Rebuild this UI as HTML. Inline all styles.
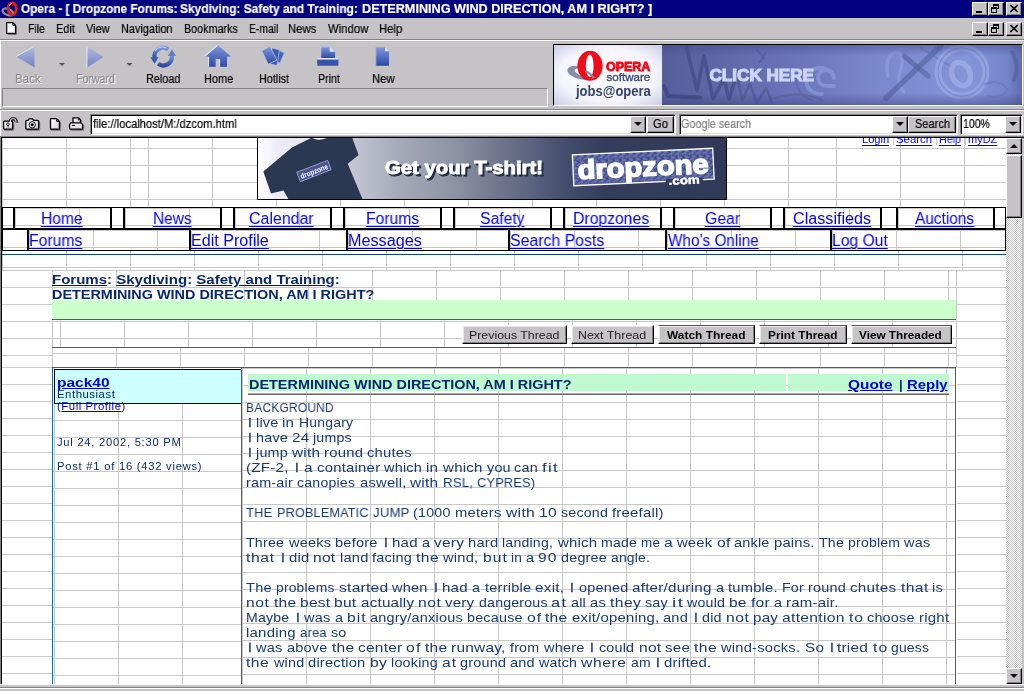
<!DOCTYPE html>
<html>
<head>
<meta charset="utf-8">
<title>Opera - Dropzone Forums</title>
<style>
html,body{margin:0;padding:0;}
body{width:1024px;height:691px;overflow:hidden;position:relative;background:#c6c3c6;font-family:"Liberation Sans",sans-serif;}
.a{position:absolute;display:block;}
.t{position:absolute;white-space:pre;transform-origin:0 50%;will-change:transform;font-family:"Liberation Sans",sans-serif;}
.t u{text-decoration:underline;text-decoration-color:inherit;}
/* grid: 64x17 tile, line on first col / first row */
.g{position:absolute;background-color:#fff;
 background-image:linear-gradient(#c8c8c8 1px,transparent 1px),linear-gradient(90deg,#c8c8c8 1px,transparent 1px);
 background-size:64px 17px;}
.btn{position:absolute;background:#c6c3c6;box-sizing:border-box;border:1px solid;border-color:#fff #000 #000 #fff;box-shadow:inset -1px -1px 0 #848284;}
.sunk{position:absolute;box-sizing:border-box;border:1px solid;border-color:#848284 #fff #fff #848284;}
.fld{position:absolute;box-sizing:border-box;background:#fff;border:1px solid;border-color:#848284 #fff #fff #848284;box-shadow:inset 1px 1px 0 #000, inset -1px -1px 0 #dedbde;}
.pb{position:absolute;background:#c6c3c6;box-sizing:border-box;border:1px solid;border-color:#fff #000 #000 #fff;box-shadow:inset -1px -1px 0 #848284, inset 1px 1px 0 #e8e8e8;}
.k{position:absolute;background:#000;}
.bl{position:absolute;background:#1a6aa8;}
</style>
</head>
<body>
<!-- ===== title bar ===== -->
<div class="a" style="left:0;top:0;width:1024px;height:18px;background:#000080"></div>
<svg class="a" style="left:0;top:0" width="22" height="18" viewBox="0 0 22 18">
<ellipse cx="7.800" cy="12" rx="5.600" ry="3" fill="none" stroke="#8e8e8e" stroke-width="2.300" transform="rotate(22 7.800 12)"/>
<ellipse cx="12.200" cy="8.800" rx="4" ry="5.900" fill="none" stroke="#e01c1c" stroke-width="3"/>
<path d="M9.300 6 Q10 3.800 11.800 3.200" stroke="#ffb8a8" stroke-width="1" fill="none"/>
<path d="M10.500 10 L13.800 13.500" stroke="#8e8e8e" stroke-width="1.600"/>
</svg>

<div class="btn" style="left:972px;top:2px;width:16px;height:14px"></div>
<div class="a" style="left:976px;top:11px;width:6px;height:2px;background:#000"></div>
<div class="btn" style="left:988px;top:2px;width:16px;height:14px"></div>
<div class="a" style="left:993px;top:4px;width:6px;height:5px;box-sizing:border-box;border:1px solid #000;border-top-width:2px"></div>
<div class="a" style="left:991px;top:7px;width:6px;height:6px;box-sizing:border-box;border:1px solid #000;border-top-width:2px;background:#c6c3c6"></div>
<div class="btn" style="left:1006px;top:2px;width:16px;height:14px"></div>
<svg class="a" style="left:1006px;top:2px" width="16" height="14"><path d="M4.3 3 L11.7 10 M11.7 3 L4.3 10" stroke="#000" stroke-width="1.7"/></svg>
<!-- MDI child buttons in menu bar -->
<div class="btn" style="left:972px;top:22px;width:16px;height:14px"></div>
<div class="a" style="left:976px;top:31px;width:6px;height:2px;background:#000"></div>
<div class="btn" style="left:988px;top:22px;width:16px;height:14px"></div>
<div class="a" style="left:993px;top:24px;width:6px;height:5px;box-sizing:border-box;border:1px solid #000;border-top-width:2px"></div>
<div class="a" style="left:991px;top:27px;width:6px;height:6px;box-sizing:border-box;border:1px solid #000;border-top-width:2px;background:#c6c3c6"></div>
<div class="btn" style="left:1006px;top:22px;width:16px;height:14px"></div>
<svg class="a" style="left:1006px;top:22px" width="16" height="14"><path d="M4.3 3 L11.7 10 M11.7 3 L4.3 10" stroke="#000" stroke-width="1.7"/></svg>

<!-- ===== menu bar ===== -->
<svg class="a" style="left:5px;top:21px" width="14" height="15" viewBox="0 0 14 15">
<path d="M1.700 1.600 H7.800 L10.500 4.300 V12.400 H1.700 Z" fill="#fff" stroke="#000" stroke-width="1.200"/>
<path d="M7.800 1.600 V4.300 H10.500" fill="none" stroke="#000" stroke-width="1"/>
<path d="M2.700 13.400 H11.500 V5" fill="none" stroke="#6a686a" stroke-width="1"/>
</svg>

<div class="a" style="left:0;top:39px;width:1024px;height:1px;background:#848284"></div>
<div class="a" style="left:0;top:40px;width:1024px;height:1px;background:#fff"></div>
<!-- ===== toolbar ===== -->
<div class="a" style="left:0;top:41px;width:1px;height:68px;background:#fff"></div>
<div class="a" style="left:0;top:111px;width:1px;height:25px;background:#fff"></div>
<svg class="a" style="left:0;top:41px" width="420" height="32" viewBox="0 41 420 32">
<defs>
<linearGradient id="bg1" x1="0" y1="0" x2="0" y2="1"><stop offset="0" stop-color="#7f98dc"/><stop offset="1" stop-color="#2c4aa4"/></linearGradient>
<linearGradient id="bg2" x1="0" y1="0" x2="0" y2="1"><stop offset="0" stop-color="#b4bce0"/><stop offset="1" stop-color="#7084c4"/></linearGradient>
</defs>
<!-- back / forward (disabled, pale) -->
<path d="M34.5 46.2 L34.5 67.6 L16 56.6 Z" fill="url(#bg2)"/>
<path d="M34.5 46.2 L16 56.6" stroke="#dfe3f0" stroke-width="1"/>
<path d="M59 63 H65 L62 66 Z" fill="#5a4a5a"/>
<path d="M87 46.2 L87 67.6 L103.5 56.9 Z" fill="url(#bg2)"/>
<path d="M87 46.2 L87 67.6" stroke="#dfe3f0" stroke-width="1"/>
<path d="M126.5 63 H132.500 L129.500 66 Z" fill="#5a4a5a"/>
<!-- reload -->
<g fill="none" stroke="url(#bg1)" stroke-width="4.200">
<path d="M154.490 57.820 A8.800 8.800 0 0 1 168.250 49.390"/>
<path d="M171.910 55.380 A8.800 8.800 0 0 1 158.150 63.810"/>
</g>
<path d="M154.900 50.800 A8.800 8.800 0 0 1 166 47.900" stroke="#c5d0f0" stroke-width="1.200" fill="none"/>
<path d="M150.400 57.300 L158.600 57.300 L154.500 63.800 Z" fill="#3a5ab0"/>
<path d="M167.800 56 L176 56 L171.900 49.500 Z" fill="#5f7cc8"/>
<!-- home -->
<path d="M217.400 45 L231 56.600 L227 56.600 L227 66.800 L220 66.800 L220 59 L215.600 59 L215.600 66.800 L208.700 66.800 L208.700 56.600 L204.800 56.600 Z" fill="url(#bg1)"/>
<path d="M204.900 56 L217.400 45.300" stroke="#e8ecf8" stroke-width="1.300" fill="none"/>
<path d="M208.500 57 V66.500 M219.600 59.500 V66.500" stroke="#dfe5f6" stroke-width=".9" fill="none"/>
<!-- hotlist -->
<g stroke-linejoin="round">
<path d="M276 49.500 L284.200 52.800 L280 63 L272 60 Z" fill="#4462b6" stroke="#a9b6e2" stroke-width=".7"/>
<path d="M272 48 L279.500 50 L277 65.600 L269 63.500 Z" fill="#3d5ab0" stroke="#b4c0e8" stroke-width=".7"/>
<path d="M261.600 50.800 L269.900 46.400 L277 60 L268.200 64.200 Z" fill="url(#bg1)" stroke="#c6d0f0" stroke-width=".7"/>
</g>
<!-- print -->
<path d="M320.800 46.600 H329.700 L335 51.800 V58.500 H320.800 Z" fill="url(#bg1)"/>
<path d="M329.700 46.600 V51.800 H335 Z" fill="#dfe5f6"/>
<path d="M320.800 46.600 V58.500 M320.800 46.900 H329.700" stroke="#c6d0f0" stroke-width=".8" fill="none"/>
<rect x="317.200" y="58" width="21.2" height="7.800" rx="1.2" fill="#3652ac"/>
<rect x="317.200" y="58" width="21.2" height="1.6" fill="#dfe5f6"/>
<!-- new -->
<path d="M375.800 47.200 H385 L389 51.200 V65.800 H375.800 Z" fill="url(#bg1)"/>
<path d="M385 47.200 V51.200 H389 Z" fill="#e4e9f8"/>
<path d="M375.800 47.200 V65.800" stroke="#a9b6e4" stroke-width="1"/>
</svg>

<div class="sunk" style="left:2px;top:88px;width:546px;height:19px"></div>
<div class="a" style="left:553px;top:44px;width:470px;height:62px;box-sizing:border-box;border:1px solid;border-color:#000 #fff #fff #000;background:#2c3a78"></div>
<svg class="a" style="left:554px;top:45px;will-change:transform" width="468" height="60" viewBox="554 45 468 60">
<defs>
<linearGradient id="ag" x1="0" y1="0" x2="1" y2="0">
<stop offset="0" stop-color="#565e9a"/><stop offset="0.12" stop-color="#5c66a4"/><stop offset="0.35" stop-color="#6974b8"/>
<stop offset="0.6" stop-color="#7a88cc"/><stop offset="0.85" stop-color="#8494d8"/><stop offset="0.96" stop-color="#7584c8"/><stop offset="1" stop-color="#5f6cac"/>
</linearGradient>
<linearGradient id="av" x1="0" y1="0" x2="0" y2="1">
<stop offset="0" stop-color="#3c4684" stop-opacity=".45"/><stop offset="0.18" stop-color="#3c4684" stop-opacity="0"/>
<stop offset="0.8" stop-color="#3c4684" stop-opacity="0"/><stop offset="1" stop-color="#3c4684" stop-opacity=".5"/>
</linearGradient>
<radialGradient id="wg" cx="0.5" cy="0.5" r="0.75">
<stop offset="0" stop-color="#ffffff"/><stop offset="0.6" stop-color="#f4f4fb"/><stop offset="1" stop-color="#c4c6e0"/>
</radialGradient>
</defs>
<rect x="662" y="45" width="360" height="60" fill="url(#ag)"/>
<!-- faint decorations -->
<g fill="none" stroke-linecap="round" stroke-linejoin="round">
<path d="M686.500 47 L697 90 L704 56 L713 99 L724 79 L729 99 L737 74" stroke="#454d88" stroke-width="3.600" opacity=".8"/>
<path d="M664 86 L668 96 L700 97.500" stroke="#3c4480" stroke-width="4" opacity=".75"/>
<path d="M757 50 L764 58 M766 52 L760 62" stroke="#4c5694" stroke-width="2" opacity=".5"/>
<path d="M737 74 L742 100 L750 84 L757 103 L766 88 L772 103" stroke="#4a528e" stroke-width="2.600" opacity=".55"/>
<path d="M775 98 Q800 90 822 100" stroke="#4a528e" stroke-width="2" opacity=".35"/>
<path d="M834 78 A14 13 0 1 0 822 94 M834 78 A8 8 0 1 0 826 86 L834 86" stroke="#93a2e0" stroke-width="4" opacity=".55"/>
<path d="M812 100 A22 20 0 0 1 800 70" stroke="#4f5a9c" stroke-width="2" opacity=".35"/>
<path d="M888 76 Q884 56 896 52 Q906 54 900 72 Q896 82 904 92" stroke="#98a6e4" stroke-width="3.500" opacity=".5"/>
<path d="M886 98 L941 46" stroke="#54609e" stroke-width="5.500" opacity=".6"/>
<path d="M904 56 L928 76" stroke="#54609e" stroke-width="5" opacity=".6"/>
<path d="M921 48 L950 66 M938 46 L921 62" stroke="#6673b8" stroke-width="2" opacity=".6"/>
<circle cx="962" cy="72" r="24" stroke="#a3b2ec" stroke-width="7" opacity=".55"/>
<circle cx="962" cy="72" r="24" stroke="#6a78bc" stroke-width="1.200" opacity=".5"/>
<ellipse cx="961" cy="74" rx="9" ry="12" transform="rotate(-25 961 74)" stroke="#a9b7ee" stroke-width="5.500" opacity=".6"/>
<path d="M985 84 Q1000 78 1008 90 Q1000 100 988 96" stroke="#6572b4" stroke-width="2" opacity=".5"/>
<path d="M1012 52 Q1020 66 1014 80" stroke="#4d5898" stroke-width="4" opacity=".5"/>
</g>
<rect x="662" y="45" width="360" height="60" fill="url(#av)"/>
<text x="709.500" y="80.600" font-family="Liberation Sans, sans-serif" font-weight="bold" font-size="15.800" fill="#ccd6f6" stroke="#ccd6f6" stroke-width="1.100" textLength="104.500" lengthAdjust="spacingAndGlyphs">CLICK HERE</text>
<!-- white logo panel -->
<rect x="554" y="45" width="108" height="60" fill="url(#wg)"/>
<ellipse cx="581.600" cy="72.800" rx="14.500" ry="6.600" transform="rotate(12 581.600 72.800)" fill="#858cac"/>
<ellipse cx="583" cy="73" rx="9" ry="3.300" transform="rotate(22 583 73)" fill="#fbfbfe"/>
<ellipse cx="590" cy="65.800" rx="12.600" ry="15" fill="#f00c18"/>
<ellipse cx="589.700" cy="65.800" rx="3.900" ry="11.400" fill="#fdfdff"/>
<path d="M585.500 71 Q590 73 594 78" stroke="#858cac" stroke-width="2.200" fill="none"/>
<text x="606" y="70.500" font-family="Liberation Sans, sans-serif" font-weight="bold" font-size="13.200" fill="#f00c18" stroke="#f00c18" stroke-width=".9" textLength="44.300" lengthAdjust="spacingAndGlyphs">OPERA</text>
<text x="606.600" y="80.600" font-family="Liberation Sans, sans-serif" font-size="11.800" fill="#3e4a7c" stroke="#3e4a7c" stroke-width=".35" textLength="43.700" lengthAdjust="spacingAndGlyphs">software</text>
<text x="576" y="96" font-family="Liberation Sans, sans-serif" font-weight="bold" font-size="14" fill="#36426f" textLength="74.800" lengthAdjust="spacingAndGlyphs">jobs@opera</text>
</svg>

<div class="a" style="left:0;top:109px;width:1024px;height:1px;background:#848284"></div>
<div class="a" style="left:0;top:110px;width:1024px;height:1px;background:#fff"></div>
<!-- ===== address bar ===== -->
<svg class="a" style="left:0;top:114px" width="88" height="20" viewBox="0 114 88 20">
<defs>
<linearGradient id="ig" x1="0" y1="0" x2="1" y2="1"><stop offset="0" stop-color="#fff"/><stop offset="1" stop-color="#d4d2d4"/></linearGradient>
<g id="aic" stroke-linejoin="round">
<!-- padlock open -->
<path d="M10.300 122 V121 Q10.300 118.600 13.200 118.600 Q16 118.600 16 121 V121.900" fill="none" stroke-width="2.800"/>
<rect x="3.600" y="121.200" width="9" height="8" rx="1" stroke-width="1.300"/>
<!-- camera -->
<path d="M25.800 121.400 Q25.800 120.400 27 120.400 H28 L29 118.800 H32.500 L33.500 120.400 H37.400 Q38.600 120.400 38.600 121.400 V128 Q38.600 129.200 37.400 129.200 H27 Q25.800 129.200 25.800 128 Z" stroke-width="1.300"/>
<!-- doc -->
<path d="M50.500 118.600 H56.600 L59.400 121.400 V129.200 H50.500 Z" stroke-width="1.300"/>
<!-- printer -->
<path d="M73 123 V117.800 H78.400 L80.400 119.800 V123" stroke-width="1.300"/>
<path d="M70.800 122.800 L72.600 122.800 H80.800 L82.600 124.600 V128 Q82.600 129.200 81.400 129.200 H71 Q69.600 129.200 69.600 128 V124.600 Z" stroke-width="1.300"/>
</g>
</defs>
<use href="#aic" x="1" y="1" fill="#777" stroke="#777"/>
<use href="#aic" fill="url(#ig)" stroke="#000"/>
<path d="M10.300 122 V121 Q10.300 118.600 13.200 118.600 Q16 118.600 16 121 V121.900" fill="none" stroke="#fff" stroke-width="1"/>
<circle cx="8" cy="124.200" r="1.300" fill="none" stroke="#000" stroke-width=".8"/>
<rect x="7.600" y="125" width=".9" height="2.400" fill="#000"/>
<circle cx="32.200" cy="124.800" r="3.200" fill="#e8e8e8" stroke="#000" stroke-width=".9"/>
<circle cx="32.200" cy="124.800" r="1.500" fill="#000"/>
<path d="M56.600 118.600 V121.400 H59.400" fill="none" stroke="#000" stroke-width="1"/>
<path d="M72 125.400 H75.200" stroke="#000" stroke-width="1"/>
<circle cx="78.600" cy="119.800" r=".8" fill="#000"/>
</svg>

<div class="fld" style="left:90px;top:114px;width:586px;height:21px"></div>
<div class="btn" style="left:630px;top:116px;width:16px;height:17px"></div>
<div class="a" style="left:634px;top:122px;width:0;height:0;border:4px solid transparent;border-top:4px solid #000;border-bottom:0"></div>
<div class="btn" style="left:647px;top:116px;width:27px;height:17px"></div>
<div class="fld" style="left:679px;top:114px;width:279px;height:21px"></div>
<div class="btn" style="left:892px;top:116px;width:16px;height:17px"></div>
<div class="a" style="left:896px;top:122px;width:0;height:0;border:4px solid transparent;border-top:4px solid #000;border-bottom:0"></div>
<div class="btn" style="left:908px;top:116px;width:48px;height:17px"></div>
<div class="fld" style="left:960px;top:114px;width:63px;height:21px"></div>
<div class="btn" style="left:1005px;top:116px;width:16px;height:17px"></div>
<div class="a" style="left:1009px;top:122px;width:0;height:0;border:4px solid transparent;border-top:4px solid #000;border-bottom:0"></div>

<!-- ===== page viewport ===== -->
<div class="a" style="left:0;top:136px;width:1024px;height:1px;background:#848284"></div>
<div class="a" style="left:0;top:136px;width:1px;height:548px;background:#848284"></div>
<div class="a" style="left:1px;top:137px;width:1023px;height:1px;background:#000"></div>
<div class="a" style="left:1px;top:137px;width:1px;height:547px;background:#000"></div>
<div class="a" id="page" style="left:2px;top:138px;width:1004px;height:546px;overflow:hidden;background:#fff">
<!-- coordinates inside #page are offset by (-3,-138); wrapper restores absolute coords -->
<div class="a" style="left:-2px;top:-138px;width:1024px;height:691px">
<!-- header area grid: horizontal y=148+17k ; vertical per sub-region -->
<div class="g" style="left:2px;top:138px;width:130px;height:132px;background-position:0px 10px"></div>
<div class="g" style="left:132px;top:138px;width:658px;height:69px;background-position:16px 10px"></div>
<div class="g" style="left:790px;top:138px;width:216px;height:69px;background-position:46px 10px"></div>
<div class="g" style="left:132px;top:251px;width:874px;height:19px;background-position:-2px -1px"></div>
<div class="k" style="left:257px;top:137px;width:470px;height:63px"></div>
<svg class="a" style="left:258px;top:138px;will-change:transform" width="468" height="61" viewBox="258 138 468 61">
<defs>
<linearGradient id="tg" x1="0" y1="0" x2="1" y2="0">
<stop offset="0" stop-color="#ffffff"/><stop offset="0.04" stop-color="#ececf6"/><stop offset="0.13" stop-color="#e4e4ee"/>
<stop offset="0.2" stop-color="#c4c6d2"/><stop offset="0.3" stop-color="#a6aab8"/><stop offset="0.42" stop-color="#8d92a4"/>
<stop offset="0.5" stop-color="#747a90"/><stop offset="0.58" stop-color="#5c6480"/><stop offset="0.66" stop-color="#424c6c"/>
<stop offset="0.74" stop-color="#343e5c"/><stop offset="1" stop-color="#303a58"/>
</linearGradient>
<pattern id="sq" width="7" height="6" patternUnits="userSpaceOnUse">
<rect width="7" height="6" fill="#6c76b6"/>
<path d="M0 1.500 q1.500 -1.500 3 0 t3 1 M1 4.500 q1.200 1.500 2.600 0 t3 -0.500 M5.500 0 v2" stroke="#3a437c" stroke-width="1.100" fill="none"/>
</pattern>
</defs>
<rect x="258" y="138" width="468" height="61" fill="url(#tg)"/>
<!-- t-shirt -->
<path d="M311 138 L292 147.500 L263.300 171.500 L271 193.500 L283.600 190.500 L288.300 199 L362.500 199 L347.700 163.700 L358.600 155 L352.300 138 Z" fill="#2b3852"/>
<path d="M312 138 Q319 141.500 326.600 138 Z" fill="#f4f4fa"/>
<g transform="rotate(-21 314 171)">
<rect x="297.500" y="166" width="33" height="10" fill="#4a5592" stroke="#a0a8d4" stroke-width=".8"/>
<text x="299.500" y="174" font-family="Liberation Sans, sans-serif" font-weight="bold" font-size="7.500" fill="#fff" textLength="29" lengthAdjust="spacingAndGlyphs">dropzone</text>
</g>
<!-- headline -->
<text x="387" y="176" font-family="Liberation Sans, sans-serif" font-weight="bold" font-size="18" fill="#232c44" stroke="#232c44" stroke-width="1" textLength="158" lengthAdjust="spacingAndGlyphs">Get your T-shirt!</text>
<text x="385" y="174" font-family="Liberation Sans, sans-serif" font-weight="bold" font-size="18" fill="#fff" stroke="#fff" stroke-width=".9" textLength="158" lengthAdjust="spacingAndGlyphs">Get your T-shirt!</text>
<!-- logo -->
<g transform="rotate(-2.700 643 167)">
<rect x="573" y="151.500" width="140.500" height="31" fill="url(#sq)" stroke="#fff" stroke-width="1.300"/>
<rect x="665" y="180" width="37" height="4" fill="#323c5a"/>
<text x="577.500" y="176" font-family="Liberation Sans, sans-serif" font-weight="bold" font-size="26.500" fill="#fff" stroke="#fff" stroke-width="1.500" textLength="131" lengthAdjust="spacingAndGlyphs">dropzone</text>
<text x="668" y="186" font-family="Liberation Sans, sans-serif" font-weight="bold" font-size="11.500" fill="#fff" stroke="#fff" stroke-width=".5" textLength="31" lengthAdjust="spacingAndGlyphs">.com</text>
</g>
</svg>

<!-- top-right links (clipped by viewport) -->

<!-- nav row 1: y=207 (1px top), cells 208..227, mid bar 228-229 -->
<div class="a" style="left:2px;top:207px;width:1004px;height:44px;background:#fff"></div>
<div class="g" style="left:15px;top:208px;width:95px;height:20px;background-position:0 0"></div>
<div class="a" style="left:3px;top:225px;width:10px;height:1px;background:#c8c8c8"></div>
<div class="g" style="left:125px;top:208px;width:95px;height:20px;background-position:0 0"></div>
<div class="a" style="left:112px;top:225px;width:11px;height:1px;background:#c8c8c8"></div>
<div class="g" style="left:235px;top:208px;width:95px;height:20px;background-position:0 0"></div>
<div class="a" style="left:222px;top:225px;width:11px;height:1px;background:#c8c8c8"></div>
<div class="g" style="left:345px;top:208px;width:95px;height:20px;background-position:0 0"></div>
<div class="a" style="left:332px;top:225px;width:11px;height:1px;background:#c8c8c8"></div>
<div class="g" style="left:455px;top:208px;width:95px;height:20px;background-position:0 0"></div>
<div class="a" style="left:442px;top:225px;width:11px;height:1px;background:#c8c8c8"></div>
<div class="g" style="left:565px;top:208px;width:95px;height:20px;background-position:0 0"></div>
<div class="a" style="left:552px;top:225px;width:11px;height:1px;background:#c8c8c8"></div>
<div class="g" style="left:675px;top:208px;width:95px;height:20px;background-position:0 0"></div>
<div class="a" style="left:662px;top:225px;width:11px;height:1px;background:#c8c8c8"></div>
<div class="g" style="left:785px;top:208px;width:95px;height:20px;background-position:0 0"></div>
<div class="a" style="left:772px;top:225px;width:11px;height:1px;background:#c8c8c8"></div>
<div class="g" style="left:898px;top:208px;width:95px;height:20px;background-position:0 0"></div>
<div class="a" style="left:882px;top:225px;width:14px;height:1px;background:#c8c8c8"></div>
<div class="a" style="left:995px;top:225px;width:10px;height:1px;background:#c8c8c8"></div>

<div class="k" style="left:2px;top:207px;width:1004px;height:1px"></div>
<div class="k" style="left:2px;top:228px;width:1004px;height:2px"></div>
<div class="k" style="left:2px;top:207px;width:1px;height:44px"></div>
<div class="k" style="left:13px;top:207px;width:2px;height:22px"></div>
<div class="k" style="left:110px;top:207px;width:2px;height:22px"></div>
<div class="k" style="left:123px;top:207px;width:2px;height:22px"></div>
<div class="k" style="left:220px;top:207px;width:2px;height:22px"></div>
<div class="k" style="left:233px;top:207px;width:2px;height:22px"></div>
<div class="k" style="left:330px;top:207px;width:2px;height:22px"></div>
<div class="k" style="left:343px;top:207px;width:2px;height:22px"></div>
<div class="k" style="left:440px;top:207px;width:2px;height:22px"></div>
<div class="k" style="left:453px;top:207px;width:2px;height:22px"></div>
<div class="k" style="left:550px;top:207px;width:2px;height:22px"></div>
<div class="k" style="left:563px;top:207px;width:2px;height:22px"></div>
<div class="k" style="left:660px;top:207px;width:2px;height:22px"></div>
<div class="k" style="left:673px;top:207px;width:2px;height:22px"></div>
<div class="k" style="left:770px;top:207px;width:2px;height:22px"></div>
<div class="k" style="left:783px;top:207px;width:2px;height:22px"></div>
<div class="k" style="left:880px;top:207px;width:2px;height:22px"></div>
<div class="k" style="left:896px;top:207px;width:2px;height:22px"></div>
<div class="k" style="left:993px;top:207px;width:2px;height:22px"></div>
<div class="k" style="left:1005px;top:207px;width:1px;height:44px"></div>

<!-- nav row 2: cells 230..249, bottom 250 -->
<div class="g" style="left:29px;top:230px;width:160px;height:20px;background-position:0 0"></div>
<div class="g" style="left:191px;top:230px;width:155px;height:20px;background-position:0 0"></div>
<div class="g" style="left:348px;top:230px;width:160px;height:20px;background-position:0 0"></div>
<div class="g" style="left:510px;top:230px;width:155px;height:20px;background-position:0 0"></div>
<div class="g" style="left:667px;top:230px;width:163px;height:20px;background-position:0 0"></div>
<div class="g" style="left:832px;top:230px;width:173px;height:20px;background-position:0 0"></div>
<div class="a" style="left:3px;top:247px;width:24px;height:1px;background:#c8c8c8"></div>

<div class="k" style="left:2px;top:250px;width:1004px;height:1px"></div>
<div class="k" style="left:27px;top:229px;width:2px;height:22px"></div>
<div class="k" style="left:189px;top:229px;width:2px;height:22px"></div>
<div class="k" style="left:346px;top:229px;width:2px;height:22px"></div>
<div class="k" style="left:508px;top:229px;width:2px;height:22px"></div>
<div class="k" style="left:665px;top:229px;width:2px;height:22px"></div>
<div class="k" style="left:830px;top:229px;width:2px;height:22px"></div>

<!-- blue line under nav -->
<div class="a" style="left:2px;top:254px;width:1004px;height:1px;background:#104878"></div>

<!-- left/right margins below y=270 -->
<div class="g" style="left:2px;top:270px;width:50px;height:97px;background-position:-1px 0"></div>
<div class="g" style="left:2px;top:367px;width:50px;height:317px;background-position:-1px 0"></div>
<div class="g" style="left:957px;top:270px;width:49px;height:97px;background-position:-1px 0"></div>
<div class="g" style="left:957px;top:367px;width:49px;height:317px;background-position:-1px 0"></div>
<div class="a" style="left:956px;top:270px;width:1px;height:97px;background:#c8c8c8"></div>

<!-- breadcrumb table x=52..956 -->
<div class="g" style="left:52px;top:270px;width:904px;height:30px;background-position:0 0"></div>
<div class="a" style="left:52px;top:300px;width:904px;height:19px;background:#ccffcc"></div>
<div class="bl" style="left:52px;top:319px;width:904px;height:1px"></div>
<!-- buttons row -->
<div class="g" style="left:52px;top:320px;width:904px;height:27px;background-position:8px 1px"></div>
<div class="a" style="left:52px;top:320px;width:1px;height:27px;background:#c8c8c8"></div>
<div class="bl" style="left:52px;top:347px;width:904px;height:1px"></div>
<div class="pb" style="left:462px;top:325px;width:105px;height:19px"></div>
<div class="pb" style="left:571px;top:325px;width:83px;height:19px"></div>
<div class="pb" style="left:658px;top:325px;width:97px;height:19px;border-top-color:#1a6aa8"></div>
<div class="pb" style="left:759px;top:325px;width:88px;height:19px;border-top-color:#1a6aa8"></div>
<div class="pb" style="left:851px;top:325px;width:101px;height:19px;border-top-color:#1a6aa8"></div>
<!-- gap row -->
<div class="g" style="left:52px;top:348px;width:904px;height:19px;background-position:0 5px"></div>

<!-- post table -->
<div class="g" style="left:53px;top:368px;width:188px;height:316px;background-position:1px 1px"></div>
<div class="g" style="left:242px;top:368px;width:713px;height:316px;background-position:0 0"></div>
<div class="bl" style="left:52px;top:367px;width:904px;height:1px"></div>
<div class="bl" style="left:52px;top:367px;width:1px;height:317px"></div>
<div class="bl" style="left:241px;top:367px;width:1px;height:317px"></div>
<div class="bl" style="left:955px;top:367px;width:1px;height:317px"></div>
<!-- user box -->
<div class="a" style="left:54px;top:369px;width:187px;height:35px;background:#ccffff;box-sizing:border-box;border:1px solid #000;border-right:0"></div>
<!-- title band -->
<div class="a" style="left:248px;top:374px;width:538px;height:17px;background:#c0f8d0"></div>
<div class="a" style="left:788px;top:374px;width:161px;height:17px;background:#c0f8d0"></div>
<div class="a" style="left:248px;top:393px;width:701px;height:1px;background:#b0b0b0"></div>
<div class="a" style="left:248px;top:394px;width:701px;height:1px;background:#606060"></div>

</div>
</div>
<!-- scrollbar -->
<svg class="a" style="left:1006px;top:138px" width="16" height="546" shape-rendering="crispEdges"><defs><pattern id="chk" width="2" height="2" patternUnits="userSpaceOnUse"><rect width="2" height="2" fill="#fff"/><rect width="1" height="1" fill="#c6c3c6"/><rect x="1" y="1" width="1" height="1" fill="#c6c3c6"/></pattern></defs><rect width="16" height="546" fill="url(#chk)"/></svg>
<div class="btn" style="left:1006px;top:138px;width:16px;height:16px"></div>
<div class="a" style="left:1010px;top:144px;width:0;height:0;border:4px solid transparent;border-bottom:4px solid #000;border-top:0"></div>
<div class="btn" style="left:1006px;top:155px;width:16px;height:63px"></div>
<div class="btn" style="left:1006px;top:668px;width:16px;height:16px"></div>
<div class="a" style="left:1010px;top:674px;width:0;height:0;border:4px solid transparent;border-top:4px solid #000;border-bottom:0"></div>
<!-- bottom edge -->
<div class="a" style="left:0;top:684px;width:1024px;height:1px;background:#fff"></div>
<div class="a" style="left:0;top:687px;width:1024px;height:1px;background:#848284"></div>
<div class="a" style="left:0;top:688px;width:1024px;height:1px;background:#fff"></div>

<!-- chrome texts (and page texts outside clip: none) -->
<span class="t" style="left:20.50px;top:3.00px;font-size:12.5px;line-height:12.5px;color:#fff;font-weight:bold;-webkit-text-stroke:0.2px;transform:scaleX(0.9435);">Opera - [ Dropzone Forums:</span>
<span class="t" style="left:180.20px;top:3.00px;font-size:12.5px;line-height:12.5px;color:#fff;font-weight:bold;-webkit-text-stroke:0.2px;transform:scaleX(0.9556);">Skydiving: Safety and Training:</span>
<span class="t" style="left:361.80px;top:3.00px;font-size:12.5px;line-height:12.5px;color:#fff;font-weight:bold;-webkit-text-stroke:0.2px;transform:scaleX(1.0114);">DETERMINING WIND DIRECTION, AM I RIGHT? ]</span>
<span class="t" style="left:28.10px;top:23.00px;font-size:12.5px;line-height:12.5px;color:#000;-webkit-text-stroke:0.2px;transform:scaleX(0.8285);">File</span>
<span class="t" style="left:56.00px;top:23.00px;font-size:12.5px;line-height:12.5px;color:#000;-webkit-text-stroke:0.2px;transform:scaleX(0.8772);">Edit</span>
<span class="t" style="left:85.90px;top:23.00px;font-size:12.5px;line-height:12.5px;color:#000;-webkit-text-stroke:0.2px;transform:scaleX(0.8781);">View</span>
<span class="t" style="left:121.10px;top:23.00px;font-size:12.5px;line-height:12.5px;color:#000;-webkit-text-stroke:0.2px;transform:scaleX(0.8717);">Navigation</span>
<span class="t" style="left:183.90px;top:23.00px;font-size:12.5px;line-height:12.5px;color:#000;-webkit-text-stroke:0.2px;transform:scaleX(0.8604);">Bookmarks</span>
<span class="t" style="left:248.90px;top:23.00px;font-size:12.5px;line-height:12.5px;color:#000;-webkit-text-stroke:0.2px;transform:scaleX(0.8272);">E-mail</span>
<span class="t" style="left:288.40px;top:23.00px;font-size:12.5px;line-height:12.5px;color:#000;-webkit-text-stroke:0.2px;transform:scaleX(0.9051);">News</span>
<span class="t" style="left:327.90px;top:23.00px;font-size:12.5px;line-height:12.5px;color:#000;-webkit-text-stroke:0.2px;transform:scaleX(0.9063);">Window</span>
<span class="t" style="left:378.90px;top:23.00px;font-size:12.5px;line-height:12.5px;color:#000;-webkit-text-stroke:0.2px;transform:scaleX(0.9060);">Help</span>
<span class="t" style="left:16.40px;top:74.00px;font-size:12.5px;line-height:12.5px;color:#fff;-webkit-text-stroke:0.2px;transform:scaleX(0.9246);">Back</span>
<span class="t" style="left:15.40px;top:73.00px;font-size:12.5px;line-height:12.5px;color:#8a888a;-webkit-text-stroke:0.2px;transform:scaleX(0.9246);">Back</span>
<span class="t" style="left:77.40px;top:74.00px;font-size:12.5px;line-height:12.5px;color:#fff;-webkit-text-stroke:0.2px;transform:scaleX(0.8420);">Forward</span>
<span class="t" style="left:76.40px;top:73.00px;font-size:12.5px;line-height:12.5px;color:#8a888a;-webkit-text-stroke:0.2px;transform:scaleX(0.8420);">Forward</span>
<span class="t" style="left:146.40px;top:73.00px;font-size:12.5px;line-height:12.5px;color:#000;-webkit-text-stroke:0.2px;transform:scaleX(0.8656);">Reload</span>
<span class="t" style="left:203.70px;top:73.00px;font-size:12.5px;line-height:12.5px;color:#000;-webkit-text-stroke:0.2px;transform:scaleX(0.8757);">Home</span>
<span class="t" style="left:259.00px;top:73.00px;font-size:12.5px;line-height:12.5px;color:#000;-webkit-text-stroke:0.2px;transform:scaleX(0.8637);">Hotlist</span>
<span class="t" style="left:318.20px;top:73.00px;font-size:12.5px;line-height:12.5px;color:#000;-webkit-text-stroke:0.2px;transform:scaleX(0.8481);">Print</span>
<span class="t" style="left:372.10px;top:73.00px;font-size:12.5px;line-height:12.5px;color:#000;-webkit-text-stroke:0.2px;transform:scaleX(0.9034);">New</span>
<span class="t" style="left:93.40px;top:118.00px;font-size:12.5px;line-height:12.5px;color:#000;-webkit-text-stroke:0.2px;transform:scaleX(0.8961);">file://localhost/M:/dzcom.html</span>
<span class="t" style="left:653.10px;top:118.00px;font-size:12.5px;line-height:12.5px;color:#000;-webkit-text-stroke:0.2px;transform:scaleX(0.8989);">Go</span>
<span class="t" style="left:681.00px;top:118.00px;font-size:12.5px;line-height:12.5px;color:#808080;-webkit-text-stroke:0.2px;transform:scaleX(0.8621);">Google search</span>
<span class="t" style="left:914.90px;top:118.00px;font-size:12.5px;line-height:12.5px;color:#000;-webkit-text-stroke:0.2px;transform:scaleX(0.8836);">Search</span>
<span class="t" style="left:963.00px;top:118.00px;font-size:12.5px;line-height:12.5px;color:#000;-webkit-text-stroke:0.2px;transform:scaleX(0.8410);">100%</span>
<span class="t" style="left:40.90px;top:211.00px;font-size:16px;line-height:16px;color:#0000ee;text-decoration:underline;transform:scaleX(0.9745);text-underline-offset:2px;text-decoration-thickness:1px;">Home</span>
<span class="t" style="left:152.90px;top:211.00px;font-size:16px;line-height:16px;color:#0000ee;text-decoration:underline;transform:scaleX(0.9646);text-underline-offset:2px;text-decoration-thickness:1px;">News</span>
<span class="t" style="left:249.40px;top:211.00px;font-size:16px;line-height:16px;color:#0000ee;text-decoration:underline;transform:scaleX(0.9948);text-underline-offset:2px;text-decoration-thickness:1px;">Calendar</span>
<span class="t" style="left:365.90px;top:211.00px;font-size:16px;line-height:16px;color:#0000ee;text-decoration:underline;transform:scaleX(0.9791);text-underline-offset:2px;text-decoration-thickness:1px;">Forums</span>
<span class="t" style="left:479.90px;top:211.00px;font-size:16px;line-height:16px;color:#0000ee;text-decoration:underline;transform:scaleX(0.9833);text-underline-offset:2px;text-decoration-thickness:1px;">Safety</span>
<span class="t" style="left:573.40px;top:211.00px;font-size:16px;line-height:16px;color:#0000ee;text-decoration:underline;transform:scaleX(0.9835);text-underline-offset:2px;text-decoration-thickness:1px;">Dropzones</span>
<span class="t" style="left:704.90px;top:211.00px;font-size:16px;line-height:16px;color:#0000ee;text-decoration:underline;transform:scaleX(0.9866);text-underline-offset:2px;text-decoration-thickness:1px;">Gear</span>
<span class="t" style="left:792.90px;top:211.00px;font-size:16px;line-height:16px;color:#0000ee;text-decoration:underline;transform:scaleX(1.0096);text-underline-offset:2px;text-decoration-thickness:1px;">Classifieds</span>
<span class="t" style="left:915.40px;top:211.00px;font-size:16px;line-height:16px;color:#0000ee;text-decoration:underline;transform:scaleX(0.9629);text-underline-offset:2px;text-decoration-thickness:1px;">Auctions</span>
<span class="t" style="left:28.80px;top:233.00px;font-size:16px;line-height:16px;color:#0000ee;text-decoration:underline;transform:scaleX(0.9828);text-underline-offset:2px;text-decoration-thickness:1px;">Forums</span>
<span class="t" style="left:190.80px;top:233.00px;font-size:16px;line-height:16px;color:#0000ee;text-decoration:underline;transform:scaleX(1.0055);text-underline-offset:2px;text-decoration-thickness:1px;">Edit Profile</span>
<span class="t" style="left:347.80px;top:233.00px;font-size:16px;line-height:16px;color:#0000ee;text-decoration:underline;transform:scaleX(1.0120);text-underline-offset:2px;text-decoration-thickness:1px;">Messages</span>
<span class="t" style="left:509.80px;top:233.00px;font-size:16px;line-height:16px;color:#0000ee;text-decoration:underline;transform:scaleX(0.9910);text-underline-offset:2px;text-decoration-thickness:1px;">Search Posts</span>
<span class="t" style="left:668.30px;top:233.00px;font-size:16px;line-height:16px;color:#0000ee;text-decoration:underline;transform:scaleX(0.9593);text-underline-offset:2px;text-decoration-thickness:1px;">Who's Online</span>
<span class="t" style="left:831.80px;top:233.00px;font-size:16px;line-height:16px;color:#0000ee;text-decoration:underline;transform:scaleX(0.9800);text-underline-offset:2px;text-decoration-thickness:1px;">Log Out</span>
<span class="t" style="left:862.00px;top:134.00px;font-size:11px;line-height:11px;color:#0000ee;text-decoration:underline;transform:scaleX(1.0103);clip-path:inset(4.00px -5px -5px -5px);text-underline-offset:2px;text-decoration-thickness:1px;">Login</span>
<span class="t" style="left:896.40px;top:134.00px;font-size:11px;line-height:11px;color:#0000ee;text-decoration:underline;transform:scaleX(1.0327);clip-path:inset(4.00px -5px -5px -5px);text-underline-offset:2px;text-decoration-thickness:1px;">Search</span>
<span class="t" style="left:939.40px;top:134.00px;font-size:11px;line-height:11px;color:#0000ee;text-decoration:underline;transform:scaleX(0.9724);clip-path:inset(4.00px -5px -5px -5px);text-underline-offset:2px;text-decoration-thickness:1px;">Help</span>
<span class="t" style="left:968.20px;top:134.00px;font-size:11px;line-height:11px;color:#0000ee;text-decoration:underline;transform:scaleX(0.9922);clip-path:inset(4.00px -5px -5px -5px);text-underline-offset:2px;text-decoration-thickness:1px;">myDZ</span>
<span class="t" style="left:891.60px;top:134.00px;font-size:11px;line-height:11px;color:#c0c0c0;clip-path:inset(4.00px -5px -5px -5px);">|</span>
<span class="t" style="left:935.10px;top:134.00px;font-size:11px;line-height:11px;color:#c0c0c0;clip-path:inset(4.00px -5px -5px -5px);">|</span>
<span class="t" style="left:963.70px;top:134.00px;font-size:11px;line-height:11px;color:#c0c0c0;clip-path:inset(4.00px -5px -5px -5px);">|</span>
<span class="t" style="left:52.40px;top:273.00px;font-size:13px;line-height:13px;color:#08286c;font-weight:bold;transform:scaleX(1.1546);text-decoration-color:#0000d8;"><u>Forums</u>: <u>Skydiving</u>: <u>Safety and Training</u>:</span>
<span class="t" style="left:52.40px;top:288.00px;font-size:13px;line-height:13px;color:#08286c;font-weight:bold;transform:scaleX(1.1092);">DETERMINING WIND DIRECTION, AM I RIGHT?</span>
<span class="t" style="left:468.90px;top:330.00px;font-size:11px;line-height:11px;color:#222;transform:scaleX(1.1240);">Previous Thread</span>
<span class="t" style="left:578.10px;top:330.00px;font-size:11px;line-height:11px;color:#222;transform:scaleX(1.1288);">Next Thread</span>
<span class="t" style="left:666.70px;top:330.00px;font-size:11px;line-height:11px;color:#000;font-weight:bold;transform:scaleX(1.0853);">Watch Thread</span>
<span class="t" style="left:768.10px;top:330.00px;font-size:11px;line-height:11px;color:#000;font-weight:bold;transform:scaleX(1.0741);">Print Thread</span>
<span class="t" style="left:859.20px;top:330.00px;font-size:11px;line-height:11px;color:#000;font-weight:bold;transform:scaleX(1.0692);">View Threaded</span>
<span class="t" style="left:56.70px;top:376.00px;font-size:13px;line-height:13px;color:#0000cc;font-weight:bold;text-decoration:underline;transform:scaleX(1.1906);">pack40</span>
<span class="t" style="left:56.90px;top:389.00px;font-size:10.5px;line-height:10.5px;color:#08246c;letter-spacing:0.5px;transform:scaleX(1.0797);">Enthusiast</span>
<span class="t" style="left:56.90px;top:401.00px;font-size:10.5px;line-height:10.5px;color:#08246c;letter-spacing:0.5px;transform:scaleX(1.0822);">(<u style="color:#0000d8">Full Profile</u>)</span>
<span class="t" style="left:56.60px;top:437.00px;font-size:10.5px;line-height:10.5px;color:#0c2c6c;letter-spacing:0.7px;transform:scaleX(1.0658);">Jul 24, 2002, 5:30 PM</span>
<span class="t" style="left:56.90px;top:461.00px;font-size:10.5px;line-height:10.5px;color:#0c2c6c;letter-spacing:0.7px;transform:scaleX(1.0689);">Post #1 of 16 (432 views)</span>
<span class="t" style="left:249.40px;top:378.00px;font-size:13px;line-height:13px;color:#08286c;font-weight:bold;transform:scaleX(1.1099);">DETERMINING WIND DIRECTION, AM I RIGHT?</span>
<span class="t" style="left:847.90px;top:378.00px;font-size:13px;line-height:13px;color:#0000cc;font-weight:bold;text-decoration:underline;transform:scaleX(1.1847);">Quote</span>
<span class="t" style="left:898.60px;top:378.00px;font-size:13px;line-height:13px;color:#08286c;font-weight:bold;">|</span>
<span class="t" style="left:907.40px;top:378.00px;font-size:13px;line-height:13px;color:#0000cc;font-weight:bold;text-decoration:underline;transform:scaleX(1.1467);">Reply</span>
<span class="t" style="left:246.40px;top:401.00px;font-size:13.5px;line-height:13.5px;color:#183a70;letter-spacing:0.2px;transform:scaleX(0.8898);">BACKGROUND</span>
<span class="t" style="left:248.20px;top:416.00px;font-size:13.5px;line-height:13.5px;color:#183a70;-webkit-text-stroke:0.35px;">I</span>
<span class="t" style="left:255.70px;top:416.00px;font-size:13.5px;line-height:13.5px;color:#183a70;letter-spacing:0.2px;transform:scaleX(1.0737);">live</span>
<span class="t" style="left:282.40px;top:416.00px;font-size:13.5px;line-height:13.5px;color:#183a70;letter-spacing:0.2px;transform:scaleX(1.1192);">in</span>
<span class="t" style="left:298.70px;top:416.00px;font-size:13.5px;line-height:13.5px;color:#183a70;letter-spacing:0.2px;transform:scaleX(1.0337);">Hungary</span>
<span class="t" style="left:248.20px;top:431.00px;font-size:13.5px;line-height:13.5px;color:#183a70;-webkit-text-stroke:0.35px;">I</span>
<span class="t" style="left:255.70px;top:431.00px;font-size:13.5px;line-height:13.5px;color:#183a70;letter-spacing:0.2px;transform:scaleX(1.0643);">have</span>
<span class="t" style="left:291.80px;top:431.00px;font-size:13.5px;line-height:13.5px;color:#183a70;letter-spacing:0.2px;transform:scaleX(1.1300);">24</span>
<span class="t" style="left:313.30px;top:431.00px;font-size:13.5px;line-height:13.5px;color:#183a70;letter-spacing:0.2px;transform:scaleX(1.0485);">jumps</span>
<span class="t" style="left:248.20px;top:446.00px;font-size:13.5px;line-height:13.5px;color:#183a70;-webkit-text-stroke:0.35px;">I</span>
<span class="t" style="left:255.70px;top:446.00px;font-size:13.5px;line-height:13.5px;color:#183a70;letter-spacing:0.2px;transform:scaleX(1.0649);">jump</span>
<span class="t" style="left:291.80px;top:446.00px;font-size:13.5px;line-height:13.5px;color:#183a70;letter-spacing:0.2px;transform:scaleX(1.1376);">with</span>
<span class="t" style="left:324.10px;top:446.00px;font-size:13.5px;line-height:13.5px;color:#183a70;letter-spacing:0.2px;transform:scaleX(1.1038);">round</span>
<span class="t" style="left:367.40px;top:446.00px;font-size:13.5px;line-height:13.5px;color:#183a70;letter-spacing:0.2px;transform:scaleX(1.0960);">chutes</span>
<span class="t" style="left:246.40px;top:461.00px;font-size:13.5px;line-height:13.5px;color:#183a70;letter-spacing:0.2px;transform:scaleX(1.1231);">(ZF-2,</span>
<span class="t" style="left:294.90px;top:461.00px;font-size:13.5px;line-height:13.5px;color:#183a70;-webkit-text-stroke:0.35px;">I</span>
<span class="t" style="left:303.90px;top:461.00px;font-size:13.5px;line-height:13.5px;color:#183a70;letter-spacing:0.2px;transform:scaleX(1.1438);">a</span>
<span class="t" style="left:316.80px;top:461.00px;font-size:13.5px;line-height:13.5px;color:#183a70;letter-spacing:0.2px;transform:scaleX(1.1042);">container</span>
<span class="t" style="left:384.20px;top:461.00px;font-size:13.5px;line-height:13.5px;color:#183a70;letter-spacing:0.2px;transform:scaleX(1.0703);">which</span>
<span class="t" style="left:426.30px;top:461.00px;font-size:13.5px;line-height:13.5px;color:#183a70;letter-spacing:0.2px;transform:scaleX(1.1285);">in</span>
<span class="t" style="left:442.70px;top:461.00px;font-size:13.5px;line-height:13.5px;color:#183a70;letter-spacing:0.2px;transform:scaleX(1.1185);">which</span>
<span class="t" style="left:486.50px;top:461.00px;font-size:13.5px;line-height:13.5px;color:#183a70;letter-spacing:0.2px;transform:scaleX(1.0643);">you</span>
<span class="t" style="left:514.40px;top:461.00px;font-size:13.5px;line-height:13.5px;color:#183a70;letter-spacing:0.2px;transform:scaleX(1.0688);">can</span>
<span class="t" style="left:542.40px;top:461.00px;font-size:13.5px;line-height:13.5px;color:#183a70;letter-spacing:1.1px;transform:scaleX(1.2353);">fit</span>
<span class="t" style="left:246.40px;top:476.00px;font-size:13.5px;line-height:13.5px;color:#183a70;letter-spacing:0.2px;transform:scaleX(1.0624);">ram-air</span>
<span class="t" style="left:297.40px;top:476.00px;font-size:13.5px;line-height:13.5px;color:#183a70;letter-spacing:0.2px;transform:scaleX(1.0462);">canopies</span>
<span class="t" style="left:359.70px;top:476.00px;font-size:13.5px;line-height:13.5px;color:#183a70;letter-spacing:0.2px;transform:scaleX(1.0925);">aswell,</span>
<span class="t" style="left:410.40px;top:476.00px;font-size:13.5px;line-height:13.5px;color:#183a70;letter-spacing:0.2px;transform:scaleX(1.1376);">with</span>
<span class="t" style="left:442.70px;top:476.00px;font-size:13.5px;line-height:13.5px;color:#183a70;letter-spacing:0.2px;transform:scaleX(0.9800);">RSL,</span>
<span class="t" style="left:477.00px;top:476.00px;font-size:13.5px;line-height:13.5px;color:#183a70;letter-spacing:0.2px;transform:scaleX(0.9474);">CYPRES)</span>
<span class="t" style="left:246.40px;top:506.00px;font-size:13.5px;line-height:13.5px;color:#183a70;letter-spacing:0.2px;transform:scaleX(0.9522);">THE</span>
<span class="t" style="left:276.80px;top:506.00px;font-size:13.5px;line-height:13.5px;color:#183a70;letter-spacing:0.2px;transform:scaleX(0.9359);">PROBLEMATIC</span>
<span class="t" style="left:372.60px;top:506.00px;font-size:13.5px;line-height:13.5px;color:#183a70;letter-spacing:0.2px;transform:scaleX(0.9769);">JUMP</span>
<span class="t" style="left:413.40px;top:506.00px;font-size:13.5px;line-height:13.5px;color:#183a70;letter-spacing:0.2px;transform:scaleX(1.0586);">(1000</span>
<span class="t" style="left:455.10px;top:506.00px;font-size:13.5px;line-height:13.5px;color:#183a70;letter-spacing:0.2px;transform:scaleX(1.0977);">meters</span>
<span class="t" style="left:505.80px;top:506.00px;font-size:13.5px;line-height:13.5px;color:#183a70;letter-spacing:0.272px;transform:scaleX(1.1600);">with</span>
<span class="t" style="left:538.90px;top:506.00px;font-size:13.5px;line-height:13.5px;color:#183a70;letter-spacing:0.2px;transform:scaleX(1.1562);">10</span>
<span class="t" style="left:560.80px;top:506.00px;font-size:13.5px;line-height:13.5px;color:#183a70;letter-spacing:0.2px;transform:scaleX(1.0531);">second</span>
<span class="t" style="left:612.00px;top:506.00px;font-size:13.5px;line-height:13.5px;color:#183a70;letter-spacing:0.2px;transform:scaleX(1.1045);">freefall)</span>
<span class="t" style="left:246.40px;top:536.00px;font-size:13.5px;line-height:13.5px;color:#183a70;letter-spacing:0.2px;transform:scaleX(1.0504);">Three</span>
<span class="t" style="left:288.60px;top:536.00px;font-size:13.5px;line-height:13.5px;color:#183a70;letter-spacing:0.2px;transform:scaleX(1.0777);">weeks</span>
<span class="t" style="left:335.00px;top:536.00px;font-size:13.5px;line-height:13.5px;color:#183a70;letter-spacing:0.2px;transform:scaleX(1.0819);">before</span>
<span class="t" style="left:383.60px;top:536.00px;font-size:13.5px;line-height:13.5px;color:#183a70;-webkit-text-stroke:0.35px;">I</span>
<span class="t" style="left:391.70px;top:536.00px;font-size:13.5px;line-height:13.5px;color:#183a70;letter-spacing:0.2px;transform:scaleX(1.1123);">had</span>
<span class="t" style="left:421.50px;top:536.00px;font-size:13.5px;line-height:13.5px;color:#183a70;letter-spacing:0.2px;transform:scaleX(1.0640);">a</span>
<span class="t" style="left:433.80px;top:536.00px;font-size:13.5px;line-height:13.5px;color:#183a70;letter-spacing:0.2px;transform:scaleX(1.1450);">very</span>
<span class="t" style="left:468.00px;top:536.00px;font-size:13.5px;line-height:13.5px;color:#183a70;letter-spacing:0.2px;transform:scaleX(1.0895);">hard</span>
<span class="t" style="left:502.40px;top:536.00px;font-size:13.5px;line-height:13.5px;color:#183a70;letter-spacing:0.2px;transform:scaleX(1.0454);">landing,</span>
<span class="t" style="left:557.60px;top:536.00px;font-size:13.5px;line-height:13.5px;color:#183a70;letter-spacing:0.2px;transform:scaleX(1.1072);">which</span>
<span class="t" style="left:601.00px;top:536.00px;font-size:13.5px;line-height:13.5px;color:#183a70;letter-spacing:0.2px;transform:scaleX(1.0414);">made</span>
<span class="t" style="left:641.10px;top:536.00px;font-size:13.5px;line-height:13.5px;color:#183a70;letter-spacing:0.2px;">me</span>
<span class="t" style="left:664.30px;top:536.00px;font-size:13.5px;line-height:13.5px;color:#183a70;letter-spacing:0.2px;transform:scaleX(1.1571);">a</span>
<span class="t" style="left:677.30px;top:536.00px;font-size:13.5px;line-height:13.5px;color:#183a70;letter-spacing:0.2px;transform:scaleX(1.0925);">week</span>
<span class="t" style="left:716.70px;top:536.00px;font-size:13.5px;line-height:13.5px;color:#183a70;letter-spacing:0.2px;transform:scaleX(1.1594);">of</span>
<span class="t" style="left:734.30px;top:536.00px;font-size:13.5px;line-height:13.5px;color:#183a70;letter-spacing:0.2px;transform:scaleX(1.0701);">ankle</span>
<span class="t" style="left:774.00px;top:536.00px;font-size:13.5px;line-height:13.5px;color:#183a70;letter-spacing:0.2px;transform:scaleX(1.0909);">pains.</span>
<span class="t" style="left:818.70px;top:536.00px;font-size:13.5px;line-height:13.5px;color:#183a70;letter-spacing:0.2px;transform:scaleX(1.0475);">The</span>
<span class="t" style="left:847.80px;top:536.00px;font-size:13.5px;line-height:13.5px;color:#183a70;letter-spacing:0.2px;transform:scaleX(1.0403);">problem</span>
<span class="t" style="left:904.10px;top:536.00px;font-size:13.5px;line-height:13.5px;color:#183a70;letter-spacing:0.2px;transform:scaleX(1.0693);">was</span>
<span class="t" style="left:246.40px;top:551.00px;font-size:13.5px;line-height:13.5px;color:#183a70;letter-spacing:0.565px;transform:scaleX(1.1600);">that</span>
<span class="t" style="left:280.60px;top:551.00px;font-size:13.5px;line-height:13.5px;color:#183a70;-webkit-text-stroke:0.35px;">I</span>
<span class="t" style="left:288.60px;top:551.00px;font-size:13.5px;line-height:13.5px;color:#183a70;letter-spacing:0.2px;transform:scaleX(1.1018);">did</span>
<span class="t" style="left:313.20px;top:551.00px;font-size:13.5px;line-height:13.5px;color:#183a70;letter-spacing:0.2px;transform:scaleX(1.1525);">not</span>
<span class="t" style="left:339.60px;top:551.00px;font-size:13.5px;line-height:13.5px;color:#183a70;letter-spacing:0.2px;transform:scaleX(1.0870);">land</span>
<span class="t" style="left:372.30px;top:551.00px;font-size:13.5px;line-height:13.5px;color:#183a70;letter-spacing:0.2px;transform:scaleX(1.0720);">facing</span>
<span class="t" style="left:416.30px;top:551.00px;font-size:13.5px;line-height:13.5px;color:#183a70;letter-spacing:0.397px;transform:scaleX(1.1600);">the</span>
<span class="t" style="left:443.30px;top:551.00px;font-size:13.5px;line-height:13.5px;color:#183a70;letter-spacing:0.2px;transform:scaleX(1.0862);">wind,</span>
<span class="t" style="left:482.70px;top:551.00px;font-size:13.5px;line-height:13.5px;color:#183a70;letter-spacing:0.871px;transform:scaleX(1.1600);">but</span>
<span class="t" style="left:510.80px;top:551.00px;font-size:13.5px;line-height:13.5px;color:#183a70;letter-spacing:0.2px;transform:scaleX(1.0166);">in</span>
<span class="t" style="left:526.00px;top:551.00px;font-size:13.5px;line-height:13.5px;color:#183a70;letter-spacing:0.2px;transform:scaleX(1.0640);">a</span>
<span class="t" style="left:538.30px;top:551.00px;font-size:13.5px;line-height:13.5px;color:#183a70;letter-spacing:0.926px;transform:scaleX(1.1600);">90</span>
<span class="t" style="left:561.10px;top:551.00px;font-size:13.5px;line-height:13.5px;color:#183a70;letter-spacing:0.2px;transform:scaleX(1.0639);">degree</span>
<span class="t" style="left:611.20px;top:551.00px;font-size:13.5px;line-height:13.5px;color:#183a70;letter-spacing:0.2px;transform:scaleX(1.0269);">angle.</span>
<span class="t" style="left:246.40px;top:581.00px;font-size:13.5px;line-height:13.5px;color:#183a70;letter-spacing:0.2px;transform:scaleX(1.0813);">The</span>
<span class="t" style="left:276.30px;top:581.00px;font-size:13.5px;line-height:13.5px;color:#183a70;letter-spacing:0.2px;transform:scaleX(1.0242);">problems</span>
<span class="t" style="left:338.90px;top:581.00px;font-size:13.5px;line-height:13.5px;color:#183a70;letter-spacing:0.2px;transform:scaleX(1.1584);">started</span>
<span class="t" style="left:392.40px;top:581.00px;font-size:13.5px;line-height:13.5px;color:#183a70;letter-spacing:0.2px;transform:scaleX(1.0767);">when</span>
<span class="t" style="left:433.90px;top:581.00px;font-size:13.5px;line-height:13.5px;color:#183a70;-webkit-text-stroke:0.35px;">I</span>
<span class="t" style="left:442.30px;top:581.00px;font-size:13.5px;line-height:13.5px;color:#183a70;letter-spacing:0.2px;transform:scaleX(1.1167);">had</span>
<span class="t" style="left:472.20px;top:581.00px;font-size:13.5px;line-height:13.5px;color:#183a70;letter-spacing:0.2px;transform:scaleX(1.0640);">a</span>
<span class="t" style="left:484.50px;top:581.00px;font-size:13.5px;line-height:13.5px;color:#183a70;letter-spacing:0.2px;transform:scaleX(1.0779);">terrible</span>
<span class="t" style="left:534.80px;top:581.00px;font-size:13.5px;line-height:13.5px;color:#183a70;letter-spacing:0.2px;transform:scaleX(1.1382);">exit,</span>
<span class="t" style="left:570.00px;top:581.00px;font-size:13.5px;line-height:13.5px;color:#183a70;-webkit-text-stroke:0.35px;">I</span>
<span class="t" style="left:578.70px;top:581.00px;font-size:13.5px;line-height:13.5px;color:#183a70;letter-spacing:0.2px;transform:scaleX(1.0706);">opened</span>
<span class="t" style="left:632.30px;top:581.00px;font-size:13.5px;line-height:13.5px;color:#183a70;letter-spacing:0.2px;transform:scaleX(1.1262);">after/during</span>
<span class="t" style="left:716.00px;top:581.00px;font-size:13.5px;line-height:13.5px;color:#183a70;letter-spacing:0.2px;transform:scaleX(1.0640);">a</span>
<span class="t" style="left:728.30px;top:581.00px;font-size:13.5px;line-height:13.5px;color:#183a70;letter-spacing:0.2px;transform:scaleX(1.0886);">tumble.</span>
<span class="t" style="left:782.10px;top:581.00px;font-size:13.5px;line-height:13.5px;color:#183a70;letter-spacing:0.2px;transform:scaleX(1.0504);">For</span>
<span class="t" style="left:808.10px;top:581.00px;font-size:13.5px;line-height:13.5px;color:#183a70;letter-spacing:0.2px;transform:scaleX(1.0727);">round</span>
<span class="t" style="left:850.30px;top:581.00px;font-size:13.5px;line-height:13.5px;color:#183a70;letter-spacing:0.2px;transform:scaleX(1.1279);">chutes</span>
<span class="t" style="left:900.60px;top:581.00px;font-size:13.5px;line-height:13.5px;color:#183a70;letter-spacing:0.335px;transform:scaleX(1.1600);">that</span>
<span class="t" style="left:932.20px;top:581.00px;font-size:13.5px;line-height:13.5px;color:#183a70;letter-spacing:0.2px;transform:scaleX(1.0847);">is</span>
<span class="t" style="left:246.40px;top:596.00px;font-size:13.5px;line-height:13.5px;color:#183a70;letter-spacing:0.44px;transform:scaleX(1.1600);">not</span>
<span class="t" style="left:273.50px;top:596.00px;font-size:13.5px;line-height:13.5px;color:#183a70;letter-spacing:0.2px;transform:scaleX(1.1525);">the</span>
<span class="t" style="left:299.90px;top:596.00px;font-size:13.5px;line-height:13.5px;color:#183a70;letter-spacing:0.2px;transform:scaleX(1.1520);">best</span>
<span class="t" style="left:334.30px;top:596.00px;font-size:13.5px;line-height:13.5px;color:#183a70;letter-spacing:0.2px;transform:scaleX(1.1525);">but</span>
<span class="t" style="left:360.70px;top:596.00px;font-size:13.5px;line-height:13.5px;color:#183a70;letter-spacing:0.2px;transform:scaleX(1.1235);">actually</span>
<span class="t" style="left:418.00px;top:596.00px;font-size:13.5px;line-height:13.5px;color:#183a70;letter-spacing:0.44px;transform:scaleX(1.1600);">not</span>
<span class="t" style="left:445.10px;top:596.00px;font-size:13.5px;line-height:13.5px;color:#183a70;letter-spacing:0.2px;transform:scaleX(1.1144);">very</span>
<span class="t" style="left:478.50px;top:596.00px;font-size:13.5px;line-height:13.5px;color:#183a70;letter-spacing:0.2px;transform:scaleX(1.0473);">dangerous</span>
<span class="t" style="left:551.30px;top:596.00px;font-size:13.5px;line-height:13.5px;color:#183a70;letter-spacing:1.1px;transform:scaleX(1.2124);">at</span>
<span class="t" style="left:570.60px;top:596.00px;font-size:13.5px;line-height:13.5px;color:#183a70;letter-spacing:0.2px;transform:scaleX(1.0640);">all</span>
<span class="t" style="left:589.70px;top:596.00px;font-size:13.5px;line-height:13.5px;color:#183a70;letter-spacing:0.2px;transform:scaleX(1.0918);">as</span>
<span class="t" style="left:609.80px;top:596.00px;font-size:13.5px;line-height:13.5px;color:#183a70;letter-spacing:0.37px;transform:scaleX(1.1600);">they</span>
<span class="t" style="left:645.00px;top:596.00px;font-size:13.5px;line-height:13.5px;color:#183a70;letter-spacing:0.2px;transform:scaleX(1.0603);">say</span>
<span class="t" style="left:672.00px;top:596.00px;font-size:13.5px;line-height:13.5px;color:#183a70;letter-spacing:1.1px;transform:scaleX(1.3747);">it</span>
<span class="t" style="left:687.10px;top:596.00px;font-size:13.5px;line-height:13.5px;color:#183a70;letter-spacing:0.2px;transform:scaleX(1.0504);">would</span>
<span class="t" style="left:729.30px;top:596.00px;font-size:13.5px;line-height:13.5px;color:#183a70;letter-spacing:0.2px;transform:scaleX(1.1497);">be</span>
<span class="t" style="left:751.10px;top:596.00px;font-size:13.5px;line-height:13.5px;color:#183a70;letter-spacing:0.2px;transform:scaleX(1.1510);">for</span>
<span class="t" style="left:774.00px;top:596.00px;font-size:13.5px;line-height:13.5px;color:#183a70;letter-spacing:0.2px;transform:scaleX(1.0640);">a</span>
<span class="t" style="left:786.30px;top:596.00px;font-size:13.5px;line-height:13.5px;color:#183a70;letter-spacing:0.2px;transform:scaleX(1.1111);">ram-air.</span>
<span class="t" style="left:246.40px;top:611.00px;font-size:13.5px;line-height:13.5px;color:#183a70;letter-spacing:0.2px;transform:scaleX(1.0452);">Maybe</span>
<span class="t" style="left:295.70px;top:611.00px;font-size:13.5px;line-height:13.5px;color:#183a70;-webkit-text-stroke:0.35px;">I</span>
<span class="t" style="left:304.40px;top:611.00px;font-size:13.5px;line-height:13.5px;color:#183a70;letter-spacing:0.2px;transform:scaleX(1.0775);">was</span>
<span class="t" style="left:335.00px;top:611.00px;font-size:13.5px;line-height:13.5px;color:#183a70;letter-spacing:0.2px;transform:scaleX(1.0640);">a</span>
<span class="t" style="left:347.30px;top:611.00px;font-size:13.5px;line-height:13.5px;color:#183a70;letter-spacing:0.888px;transform:scaleX(1.1600);">bit</span>
<span class="t" style="left:370.20px;top:611.00px;font-size:13.5px;line-height:13.5px;color:#183a70;letter-spacing:0.2px;transform:scaleX(1.0722);">angry/anxious</span>
<span class="t" style="left:467.20px;top:611.00px;font-size:13.5px;line-height:13.5px;color:#183a70;letter-spacing:0.2px;transform:scaleX(1.0621);">because</span>
<span class="t" style="left:527.00px;top:611.00px;font-size:13.5px;line-height:13.5px;color:#183a70;letter-spacing:0.797px;transform:scaleX(1.1600);">of</span>
<span class="t" style="left:545.30px;top:611.00px;font-size:13.5px;line-height:13.5px;color:#183a70;letter-spacing:0.2px;transform:scaleX(1.1525);">the</span>
<span class="t" style="left:571.70px;top:611.00px;font-size:13.5px;line-height:13.5px;color:#183a70;letter-spacing:0.2px;transform:scaleX(1.1042);">exit/opening,</span>
<span class="t" style="left:663.20px;top:611.00px;font-size:13.5px;line-height:13.5px;color:#183a70;letter-spacing:0.2px;transform:scaleX(1.0862);">and</span>
<span class="t" style="left:694.20px;top:611.00px;font-size:13.5px;line-height:13.5px;color:#183a70;-webkit-text-stroke:0.35px;">I</span>
<span class="t" style="left:701.90px;top:611.00px;font-size:13.5px;line-height:13.5px;color:#183a70;letter-spacing:0.2px;transform:scaleX(1.0638);">did</span>
<span class="t" style="left:725.80px;top:611.00px;font-size:13.5px;line-height:13.5px;color:#183a70;letter-spacing:0.44px;transform:scaleX(1.1600);">not</span>
<span class="t" style="left:752.90px;top:611.00px;font-size:13.5px;line-height:13.5px;color:#183a70;letter-spacing:0.2px;transform:scaleX(1.1229);">pay</span>
<span class="t" style="left:782.10px;top:611.00px;font-size:13.5px;line-height:13.5px;color:#183a70;letter-spacing:0.261px;transform:scaleX(1.1600);">attention</span>
<span class="t" style="left:848.90px;top:611.00px;font-size:13.5px;line-height:13.5px;color:#183a70;letter-spacing:0.797px;transform:scaleX(1.1600);">to</span>
<span class="t" style="left:867.20px;top:611.00px;font-size:13.5px;line-height:13.5px;color:#183a70;letter-spacing:0.2px;transform:scaleX(1.0643);">choose</span>
<span class="t" style="left:918.90px;top:611.00px;font-size:13.5px;line-height:13.5px;color:#183a70;letter-spacing:0.2px;transform:scaleX(1.1121);">right</span>
<span class="t" style="left:246.40px;top:626.00px;font-size:13.5px;line-height:13.5px;color:#183a70;letter-spacing:0.2px;transform:scaleX(1.1105);">landing</span>
<span class="t" style="left:300.40px;top:626.00px;font-size:13.5px;line-height:13.5px;color:#183a70;letter-spacing:0.2px;transform:scaleX(0.9664);">area</span>
<span class="t" style="left:331.40px;top:626.00px;font-size:13.5px;line-height:13.5px;color:#183a70;letter-spacing:0.2px;transform:scaleX(1.0572);">so</span>
<span class="t" style="left:248.20px;top:641.00px;font-size:13.5px;line-height:13.5px;color:#183a70;-webkit-text-stroke:0.35px;">I</span>
<span class="t" style="left:256.30px;top:641.00px;font-size:13.5px;line-height:13.5px;color:#183a70;letter-spacing:0.2px;transform:scaleX(1.0775);">was</span>
<span class="t" style="left:286.90px;top:641.00px;font-size:13.5px;line-height:13.5px;color:#183a70;letter-spacing:0.2px;transform:scaleX(1.0719);">above</span>
<span class="t" style="left:331.50px;top:641.00px;font-size:13.5px;line-height:13.5px;color:#183a70;letter-spacing:0.2px;transform:scaleX(1.1525);">the</span>
<span class="t" style="left:357.90px;top:641.00px;font-size:13.5px;line-height:13.5px;color:#183a70;letter-spacing:0.2px;transform:scaleX(1.1470);">center</span>
<span class="t" style="left:406.40px;top:641.00px;font-size:13.5px;line-height:13.5px;color:#183a70;letter-spacing:1.1px;transform:scaleX(1.1639);">of</span>
<span class="t" style="left:425.10px;top:641.00px;font-size:13.5px;line-height:13.5px;color:#183a70;letter-spacing:0.2px;transform:scaleX(1.1473);">the</span>
<span class="t" style="left:451.40px;top:641.00px;font-size:13.5px;line-height:13.5px;color:#183a70;letter-spacing:0.2px;transform:scaleX(1.1459);">runway,</span>
<span class="t" style="left:510.10px;top:641.00px;font-size:13.5px;line-height:13.5px;color:#183a70;letter-spacing:0.2px;transform:scaleX(1.0539);">from</span>
<span class="t" style="left:543.50px;top:641.00px;font-size:13.5px;line-height:13.5px;color:#183a70;letter-spacing:0.2px;transform:scaleX(1.0750);">where</span>
<span class="t" style="left:590.00px;top:641.00px;font-size:13.5px;line-height:13.5px;color:#183a70;-webkit-text-stroke:0.35px;">I</span>
<span class="t" style="left:599.20px;top:641.00px;font-size:13.5px;line-height:13.5px;color:#183a70;letter-spacing:0.2px;transform:scaleX(1.0610);">could</span>
<span class="t" style="left:638.60px;top:641.00px;font-size:13.5px;line-height:13.5px;color:#183a70;letter-spacing:0.2px;transform:scaleX(1.1525);">not</span>
<span class="t" style="left:665.00px;top:641.00px;font-size:13.5px;line-height:13.5px;color:#183a70;letter-spacing:0.2px;transform:scaleX(1.1229);">see</span>
<span class="t" style="left:694.20px;top:641.00px;font-size:13.5px;line-height:13.5px;color:#183a70;letter-spacing:0.44px;transform:scaleX(1.1600);">the</span>
<span class="t" style="left:721.30px;top:641.00px;font-size:13.5px;line-height:13.5px;color:#183a70;letter-spacing:0.2px;transform:scaleX(1.0891);">wind-socks.</span>
<span class="t" style="left:804.60px;top:641.00px;font-size:13.5px;line-height:13.5px;color:#183a70;letter-spacing:0.2px;transform:scaleX(1.1303);">So</span>
<span class="t" style="left:829.60px;top:641.00px;font-size:13.5px;line-height:13.5px;color:#183a70;-webkit-text-stroke:0.35px;">I</span>
<span class="t" style="left:837.30px;top:641.00px;font-size:13.5px;line-height:13.5px;color:#183a70;letter-spacing:0.2px;transform:scaleX(1.1417);">tried</span>
<span class="t" style="left:872.50px;top:641.00px;font-size:13.5px;line-height:13.5px;color:#183a70;letter-spacing:1.056px;transform:scaleX(1.1600);">to</span>
<span class="t" style="left:891.10px;top:641.00px;font-size:13.5px;line-height:13.5px;color:#183a70;letter-spacing:0.2px;transform:scaleX(1.0290);">guess</span>
<span class="t" style="left:246.40px;top:656.00px;font-size:13.5px;line-height:13.5px;color:#183a70;letter-spacing:0.44px;transform:scaleX(1.1600);">the</span>
<span class="t" style="left:273.50px;top:656.00px;font-size:13.5px;line-height:13.5px;color:#183a70;letter-spacing:0.2px;transform:scaleX(1.0642);">wind</span>
<span class="t" style="left:308.00px;top:656.00px;font-size:13.5px;line-height:13.5px;color:#183a70;letter-spacing:0.2px;transform:scaleX(1.0869);">direction</span>
<span class="t" style="left:369.50px;top:656.00px;font-size:13.5px;line-height:13.5px;color:#183a70;letter-spacing:0.211px;transform:scaleX(1.1600);">by</span>
<span class="t" style="left:390.60px;top:656.00px;font-size:13.5px;line-height:13.5px;color:#183a70;letter-spacing:0.2px;transform:scaleX(1.0617);">looking</span>
<span class="t" style="left:441.60px;top:656.00px;font-size:13.5px;line-height:13.5px;color:#183a70;letter-spacing:0.797px;transform:scaleX(1.1600);">at</span>
<span class="t" style="left:459.90px;top:656.00px;font-size:13.5px;line-height:13.5px;color:#183a70;letter-spacing:0.2px;transform:scaleX(1.0662);">ground</span>
<span class="t" style="left:510.10px;top:656.00px;font-size:13.5px;line-height:13.5px;color:#183a70;letter-spacing:0.2px;transform:scaleX(1.0731);">and</span>
<span class="t" style="left:539.00px;top:656.00px;font-size:13.5px;line-height:13.5px;color:#183a70;letter-spacing:0.2px;transform:scaleX(1.0504);">watch</span>
<span class="t" style="left:581.20px;top:656.00px;font-size:13.5px;line-height:13.5px;color:#183a70;letter-spacing:0.503px;transform:scaleX(1.1600);">where</span>
<span class="t" style="left:630.50px;top:656.00px;font-size:13.5px;line-height:13.5px;color:#183a70;letter-spacing:0.2px;transform:scaleX(1.0340);">am</span>
<span class="t" style="left:656.20px;top:656.00px;font-size:13.5px;line-height:13.5px;color:#183a70;-webkit-text-stroke:0.35px;">I</span>
<span class="t" style="left:664.30px;top:656.00px;font-size:13.5px;line-height:13.5px;color:#183a70;letter-spacing:0.2px;transform:scaleX(1.1060);">drifted.</span>
</body>
</html>
